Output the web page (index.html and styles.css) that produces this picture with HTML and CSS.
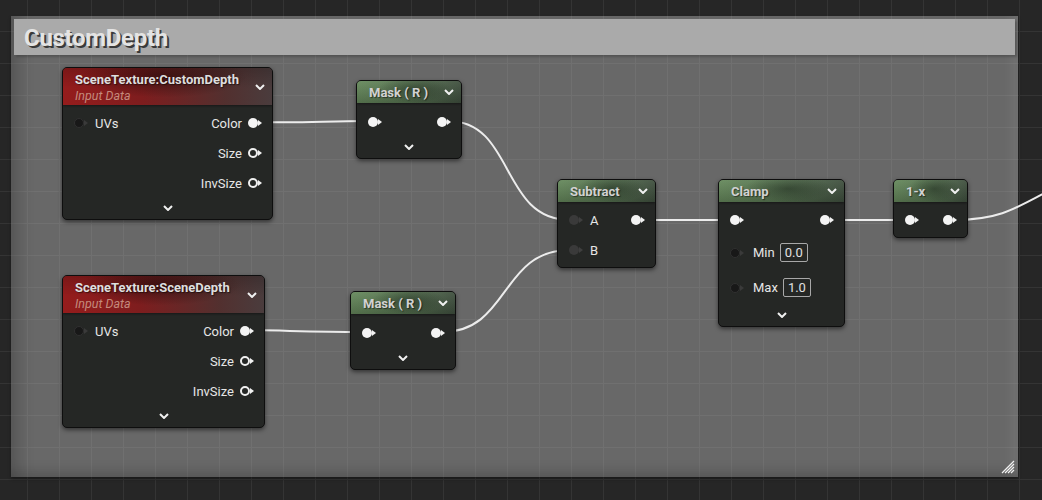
FILE: index.html
```html
<!DOCTYPE html>
<html lang="en">
<head>
    <meta charset="UTF-8">
    <title>CustomDepth - Material Graph</title>
    <link rel="stylesheet" href="styles.css">
</head>
<body>
    <div class="graph">
        <div class="comment">
            <div class="comment-title">CustomDepth</div>
            <svg class="resize" viewBox="0 0 14 14" width="14" height="14">
                <path d="M13 1 L1 13 M13 4 L4 13 M13 7 L7 13 M13 10 L10 13" />
            </svg>
        </div>

        <svg class="wires" width="1042" height="500" viewBox="0 0 1042 500">
            <path d="M262 122 C305 123, 325 121, 368 121" />
            <path d="M448 121 C515 121, 500 220, 570 220" />
            <path d="M254 330 C300 331, 320 332, 362 332" />
            <path d="M442 332 C510 332, 500 250, 570 250" />
            <path d="M641 220 L730 220" />
            <path d="M831 220 L906 220" />
            <path d="M953 220 C995 220, 1010 212, 1050 190" />
        </svg>

        <!-- scene texture inputs -->
        <div class="node n-custom">
            <div class="head red tall">
                <div>
                    <div class="title">SceneTexture:CustomDepth</div>
                    <div class="sub">Input Data</div>
                </div>
                <svg class="chev" viewBox="0 0 10 6"><polyline points="1,1 5,5 9,1" /></svg>
            </div>
            <div class="body">
                <div class="row">
                    <span class="in"><span class="pin empty"></span><span class="label">UVs</span></span>
                    <span class="out"><span class="label">Color</span><span class="pin full"></span></span>
                </div>
                <div class="row end">
                    <span class="out"><span class="label">Size</span><span class="pin ring"></span></span>
                </div>
                <div class="row end">
                    <span class="out"><span class="label">InvSize</span><span class="pin ring"></span></span>
                </div>
                <div class="foot"><svg class="chev" viewBox="0 0 10 6"><polyline points="1,1 5,5 9,1" /></svg></div>
            </div>
        </div>

        <div class="node n-scene">
            <div class="head red tall">
                <div>
                    <div class="title">SceneTexture:SceneDepth</div>
                    <div class="sub">Input Data</div>
                </div>
                <svg class="chev" viewBox="0 0 10 6"><polyline points="1,1 5,5 9,1" /></svg>
            </div>
            <div class="body">
                <div class="row">
                    <span class="in"><span class="pin empty"></span><span class="label">UVs</span></span>
                    <span class="out"><span class="label">Color</span><span class="pin full"></span></span>
                </div>
                <div class="row end">
                    <span class="out"><span class="label">Size</span><span class="pin ring"></span></span>
                </div>
                <div class="row end">
                    <span class="out"><span class="label">InvSize</span><span class="pin ring"></span></span>
                </div>
                <div class="foot"><svg class="chev" viewBox="0 0 10 6"><polyline points="1,1 5,5 9,1" /></svg></div>
            </div>
        </div>

        <!-- masks -->
        <div class="node n-mask1">
            <div class="head green">
                <div class="title">Mask ( R )</div>
                <svg class="chev" viewBox="0 0 10 6"><polyline points="1,1 5,5 9,1" /></svg>
            </div>
            <div class="body">
                <div class="row">
                    <span class="in"><span class="pin full"></span></span>
                    <span class="out"><span class="pin full"></span></span>
                </div>
                <div class="foot"><svg class="chev" viewBox="0 0 10 6"><polyline points="1,1 5,5 9,1" /></svg></div>
            </div>
        </div>

        <div class="node n-mask2">
            <div class="head green">
                <div class="title">Mask ( R )</div>
                <svg class="chev" viewBox="0 0 10 6"><polyline points="1,1 5,5 9,1" /></svg>
            </div>
            <div class="body">
                <div class="row">
                    <span class="in"><span class="pin full"></span></span>
                    <span class="out"><span class="pin full"></span></span>
                </div>
                <div class="foot"><svg class="chev" viewBox="0 0 10 6"><polyline points="1,1 5,5 9,1" /></svg></div>
            </div>
        </div>

        <!-- math -->
        <div class="node n-sub">
            <div class="head green">
                <div class="title">Subtract</div>
                <svg class="chev" viewBox="0 0 10 6"><polyline points="1,1 5,5 9,1" /></svg>
            </div>
            <div class="body short">
                <div class="row">
                    <span class="in"><span class="pin dim"></span><span class="label">A</span></span>
                    <span class="out"><span class="pin full"></span></span>
                </div>
                <div class="row">
                    <span class="in"><span class="pin dim"></span><span class="label">B</span></span>
                </div>
            </div>
        </div>

        <div class="node n-clamp">
            <div class="head green">
                <div class="title">Clamp</div>
                <svg class="chev" viewBox="0 0 10 6"><polyline points="1,1 5,5 9,1" /></svg>
            </div>
            <div class="body">
                <div class="row">
                    <span class="in"><span class="pin full"></span></span>
                    <span class="out"><span class="pin full"></span></span>
                </div>
                <div class="row tall">
                    <span class="in"><span class="pin empty"></span><span class="label wide">Min</span><span class="value">0.0</span></span>
                </div>
                <div class="row tall">
                    <span class="in"><span class="pin empty"></span><span class="label wide">Max</span><span class="value">1.0</span></span>
                </div>
                <div class="foot"><svg class="chev" viewBox="0 0 10 6"><polyline points="1,1 5,5 9,1" /></svg></div>
            </div>
        </div>

        <div class="node n-oneminus">
            <div class="head green">
                <div class="title">1-x</div>
                <svg class="chev" viewBox="0 0 10 6"><polyline points="1,1 5,5 9,1" /></svg>
            </div>
            <div class="body short">
                <div class="row">
                    <span class="in"><span class="pin full"></span></span>
                    <span class="out"><span class="pin full"></span></span>
                </div>
            </div>
        </div>
    </div>
</body>
</html>
```

FILE: styles.css
```css
* {
    margin: 0;
    padding: 0;
    box-sizing: border-box;
}

body {
    background: #262626;
    font-family: Roboto, 'Liberation Sans', sans-serif;
    overflow: hidden;
}

.graph {
    position: relative;
    width: 1042px;
    height: 500px;
    background-color: #262626;
    background-image:
        linear-gradient(to right, #343434 1px, transparent 1px),
        linear-gradient(to bottom, #343434 1px, transparent 1px);
    background-size: 32px 32px;
    background-position: 27px 31px;
}

/* comment box */
.comment {
    position: absolute;
    left: 11px;
    top: 16px;
    width: 1007px;
    height: 461px;
    background: rgba(186, 186, 186, 0.45);
    box-shadow:
        inset 18px 0 16px -10px rgba(0, 0, 0, 0.18),
        inset 0 -14px 12px -8px rgba(0, 0, 0, 0.15),
        inset -22px 0 10px -14px rgba(255, 255, 255, 0.06),
        0 2px 3px rgba(0, 0, 0, 0.35);
    padding: 3px;
}

.comment-title {
    height: 36px;
    background: #aaaaaa;
    color: #e4e4e4;
    font-size: 24px;
    font-weight: bold;
    line-height: 38px;
    padding-left: 10px;
    letter-spacing: -0.3px;
    text-shadow: 2px 2px 0 #3a3a3a;
    box-shadow: 2px 2px 2px rgba(0, 0, 0, 0.2);
}

.resize {
    position: absolute;
    right: 3px;
    bottom: 3px;
}

.resize path {
    stroke: #f2f2f2;
    stroke-width: 1.2;
    fill: none;
}

.wires {
    position: absolute;
    left: 0;
    top: 0;
}

.wires path {
    fill: none;
    stroke: #ececec;
    stroke-width: 2;
}

/* nodes */
.node {
    position: absolute;
    background: #252725;
    border: 1px solid #0e0e0e;
    border-radius: 5px;
    box-shadow: 0 2px 4px rgba(0, 0, 0, 0.5);
    overflow: hidden;
    color: #e6e6e6;
    font-size: 13px;
}

.n-custom { left: 62px; top: 67px; width: 211px; }
.n-scene { left: 62px; top: 275px; width: 203px; }
.n-mask1 { left: 356px; top: 80px; width: 106px; }
.n-mask2 { left: 350px; top: 291px; width: 106px; }
.n-sub { left: 557px; top: 179px; width: 99px; }
.n-clamp { left: 718px; top: 179px; width: 127px; }
.n-oneminus { left: 893px; top: 179px; width: 75px; }

.head {
    display: flex;
    align-items: center;
    justify-content: space-between;
    height: 22px;
    padding: 0 7px 0 12px;
    box-shadow: 0 1px 2px rgba(0, 0, 0, 0.4);
}

.head.tall {
    height: 37px;
    padding-top: 1px;
}

.head.red {
    background:
        radial-gradient(ellipse 40% 55% at 48% 25%, rgba(25, 8, 8, 0.55), transparent),
        linear-gradient(to bottom, rgba(0, 0, 0, 0.18), rgba(0, 0, 0, 0) 55%),
        linear-gradient(to right, #951c1c 0%, #7e1d1e 38%, #52302f 78%, #4a3c3d 100%);
}

.head.green {
    background:
        radial-gradient(ellipse 35% 60% at 55% 40%, rgba(20, 30, 20, 0.45), transparent),
        linear-gradient(to bottom, rgba(255, 255, 255, 0.05), rgba(0, 0, 0, 0.2)),
        linear-gradient(to right, #678a5d 0%, #587552 50%, #415140 100%);
}

.title {
    font-weight: bold;
    color: #d2d2d2;
    text-shadow: 1px 1px 1px rgba(0, 0, 0, 0.5);
    white-space: nowrap;
}

.red .title {
    color: #dedede;
}

.sub {
    font-style: italic;
    font-size: 12.5px;
    color: #c48a7c;
    margin-top: 1px;
}

.chev {
    width: 10px;
    height: 6px;
    flex: none;
}

.chev polyline {
    fill: none;
    stroke: #f0f0f0;
    stroke-width: 2;
}

.body {
    padding: 3px 10px 0 11px;
}

.n-mask1 .body,
.n-mask2 .body {
    padding-top: 4px;
}

.body.short {
    padding-bottom: 2px;
}

.row {
    display: flex;
    align-items: center;
    justify-content: space-between;
    height: 30px;
}

.row.end {
    justify-content: flex-end;
}

.row.tall {
    height: 35px;
}

.in,
.out {
    display: flex;
    align-items: center;
}

.label {
    white-space: nowrap;
}

.in .label {
    margin-left: 7px;
}

.in .label.wide {
    margin-left: 9px;
}

.out .label {
    margin-right: 6px;
}

.value {
    margin-left: 5px;
    border: 1px solid #a8a8a8;
    border-radius: 2px;
    padding: 1px 4px;
    line-height: 15px;
    color: #e0e0e0;
}

.foot {
    display: flex;
    justify-content: center;
    align-items: center;
    height: 21px;
    padding-bottom: 2px;
    margin-left: -1px;
}

/* pins */
.pin {
    position: relative;
    width: 10px;
    height: 10px;
    border-radius: 50%;
    margin-right: 4px;
    flex: none;
}

.pin::after {
    content: "";
    position: absolute;
    left: 10px;
    top: 2px;
    border-left: 4px solid #f2f2f2;
    border-top: 3px solid transparent;
    border-bottom: 3px solid transparent;
}

.pin.full {
    background: #f4f4f4;
}

.pin.ring {
    border: 2px solid #f0f0f0;
}

.pin.ring::after {
    left: 8px;
    top: 0;
}

.pin.empty {
    background: #181818;
    border: 1px solid #303030;
}

.pin.empty::after {
    left: 9px;
    top: 1px;
    border-left-color: #3a3a3a;
}

.pin.dim {
    background: #3a3a3a;
}

.pin.dim::after {
    border-left-color: #3f3f3f;
}
```
